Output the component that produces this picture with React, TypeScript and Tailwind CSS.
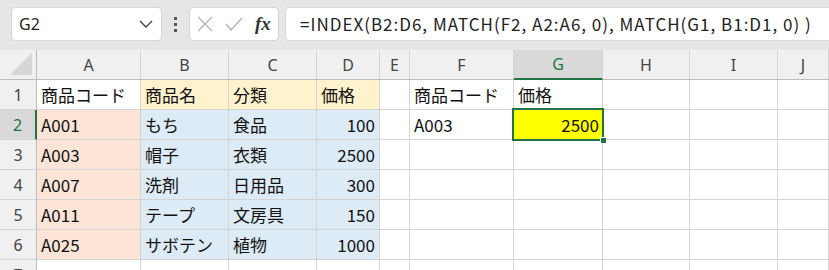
import React from 'react';

const cols = ['A', 'B', 'C', 'D', 'E', 'F', 'G', 'H', 'I', 'J'];

type Cell = { v?: string; bg?: string; right?: boolean };

const data: Record<number, Cell[]> = {
  1: [{ v: '商品コード' }, { v: '商品名', bg: 'bg-[#fff2cc]' }, { v: '分類', bg: 'bg-[#fff2cc]' }, { v: '価格', bg: 'bg-[#fff2cc]' }, {}, { v: '商品コード' }, { v: '価格' }],
  2: [{ v: 'A001', bg: 'bg-[#fce4d6]' }, { v: 'もち', bg: 'bg-[#ddebf7]' }, { v: '食品', bg: 'bg-[#ddebf7]' }, { v: '100', bg: 'bg-[#ddebf7]', right: true }, {}, { v: 'A003' }, { v: '2500', bg: 'bg-[#ffff00]', right: true }],
  3: [{ v: 'A003', bg: 'bg-[#fce4d6]' }, { v: '帽子', bg: 'bg-[#ddebf7]' }, { v: '衣類', bg: 'bg-[#ddebf7]' }, { v: '2500', bg: 'bg-[#ddebf7]', right: true }],
  4: [{ v: 'A007', bg: 'bg-[#fce4d6]' }, { v: '洗剤', bg: 'bg-[#ddebf7]' }, { v: '日用品', bg: 'bg-[#ddebf7]' }, { v: '300', bg: 'bg-[#ddebf7]', right: true }],
  5: [{ v: 'A011', bg: 'bg-[#fce4d6]' }, { v: 'テープ', bg: 'bg-[#ddebf7]' }, { v: '文房具', bg: 'bg-[#ddebf7]' }, { v: '150', bg: 'bg-[#ddebf7]', right: true }],
  6: [{ v: 'A025', bg: 'bg-[#fce4d6]' }, { v: 'サボテン', bg: 'bg-[#ddebf7]' }, { v: '植物', bg: 'bg-[#ddebf7]' }, { v: '1000', bg: 'bg-[#ddebf7]', right: true }],
  7: [],
};

const gridCols = 'grid grid-cols-[37px_104px_88px_88px_63px_30px_104px_89px_87px_88px_1fr]';
const hdrFont = "[font-family:'Noto_Sans','Liberation_Sans',sans-serif]";
const cellFont = "[font-family:'Noto_Sans_CJK_JP',sans-serif]";

export default function App() {
  return (
    <div className="w-[829px] h-[270px] overflow-hidden bg-white">
      {/* formula bar */}
      <div className="h-[50px] bg-[#e6e6e6] flex items-start pt-[7px] pl-[11px]">
        <div className="w-[151px] h-[34px] bg-white rounded-[4px] border border-[#d6d6d6] flex items-center justify-between pl-[7px] pr-[8px]">
          <span className={`text-[16px] text-[#222] ${hdrFont}`}>G2</span>
          <svg width="14" height="8" viewBox="0 0 14 8" fill="none" stroke="#444" strokeWidth="1.4"><path d="M1 1l6 6 6-6" /></svg>
        </div>
        <div className="w-[27px] h-[34px] flex flex-col items-center justify-center gap-[3px]">
          <span className="w-[3px] h-[3px] bg-[#555]" />
          <span className="w-[3px] h-[3px] bg-[#555]" />
          <span className="w-[3px] h-[3px] bg-[#555]" />
        </div>
        <div className="w-[90px] h-[34px] bg-white rounded-[4px] border border-[#d6d6d6] flex items-center pl-[7px] gap-[12px]">
          <svg width="16" height="16" viewBox="0 0 16 16" fill="none" stroke="#b3b3b3" strokeWidth="1.3"><path d="M1 1l14 14M15 1L1 15" /></svg>
          <svg width="18" height="14" viewBox="0 0 18 14" fill="none" stroke="#b3b3b3" strokeWidth="1.3"><path d="M1 7l5 6L17 1" /></svg>
          <span className="text-[19px] italic font-bold text-[#333] leading-none [font-family:'Liberation_Serif',serif] -mt-[2px]">fx</span>
        </div>
        <div className="ml-[6px] flex-1 h-[34px] bg-white rounded-l-[4px] border border-r-0 border-[#d6d6d6] flex items-center pl-[14px]">
          <span className={`text-[17px] tracking-[1px] text-[#222] whitespace-nowrap ${cellFont}`}>=INDEX(B2:D6, MATCH(F2, A2:A6, 0), MATCH(G1, B1:D1, 0) )</span>
        </div>
      </div>

      {/* column headers */}
      <div className={`${gridCols} h-[30px] bg-[#f0f0f0] border-b border-[#bdbdbd]`}>
        <div className="border-r border-[#bdbdbd] relative">
          <div className="absolute right-[4px] bottom-[4px] w-0 h-0 border-l-[22px] border-l-transparent border-b-[22px] border-b-[#d6d6d6]" />
        </div>
        {cols.map((c) => (
          <div
            key={c}
            className={`flex items-center justify-center text-[16px] ${hdrFont} ${c === 'G' ? 'bg-[#d9d9d9] text-[#217346] border-b-2 border-[#217346] -mb-px border-r border-r-[#d4d4d4]' : 'text-[#444] border-r border-[#d4d4d4]'}`}
          >
            {c}
          </div>
        ))}
      </div>

      {/* rows */}
      {[1, 2, 3, 4, 5, 6, 7].map((r) => (
        <div key={r} className={`${gridCols} h-[30px] ${r === 2 ? 'relative z-10' : ''}`}>
          <div
            className={`flex items-center justify-center text-[16px] ${hdrFont} border-b border-[#d4d4d4] ${r === 2 ? 'bg-[#d9d9d9] text-[#217346] border-r-2 border-r-[#217346]' : 'bg-[#f0f0f0] text-[#444] border-r border-r-[#bdbdbd]'}`}
          >
            {r}
          </div>
          {cols.map((c, i) => {
            const cell = data[r][i] || {};
            const selected = r === 2 && c === 'G';
            return (
              <div
                key={c}
                className={`relative flex items-center px-[4px] text-[17px] text-[#111] whitespace-nowrap ${cellFont} ${cell.bg || ''} ${cell.right ? 'justify-end' : ''} ${selected ? 'z-10' : 'border-r border-b border-[#d4d4d4]'}`}
              >
                {cell.v}
                {selected && (
                  <>
                    <div className="absolute -left-[2px] -top-[2px] -right-[1px] -bottom-[1px] border-2 border-[#217346] pointer-events-none" />
                    <div className="absolute -right-[4px] -bottom-[4px] w-[7px] h-[7px] bg-[#217346] border border-white" />
                  </>
                )}
              </div>
            );
          })}
        </div>
      ))}
    </div>
  );
}
